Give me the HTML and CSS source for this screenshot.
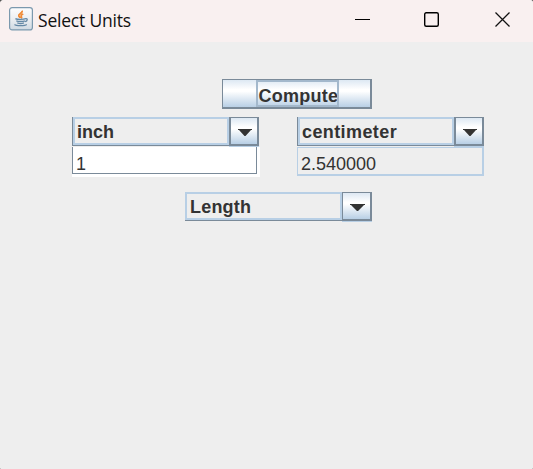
FILE: index.html
```html
<!DOCTYPE html>
<html lang="en">
<head>
<meta charset="utf-8">
<title>Select Units</title>
<link rel="stylesheet" href="styles.css">
</head>
<body>
<div class="window">
  <header class="titlebar">
    <svg class="app-icon" viewBox="0 0 24 24">
      <defs><linearGradient id="tile" x1="0" y1="0" x2="0" y2="1"><stop offset="0" stop-color="#fdfdfe"/><stop offset=".5" stop-color="#eceff2"/><stop offset="1" stop-color="#cfd9e2"/></linearGradient></defs>
      <rect x=".6" y=".6" width="22.8" height="22.3" rx="2.5" fill="url(#tile)" stroke="#7b99ae" stroke-width="1.2"/>
      <path d="M13 3.6c1.3 2.2-4 3.3-3.3 5.3.3.8 1.4 1.2 1.5 2.1M14.3 7c-2.4 1-2.7 1.8-1.8 2.8.5.6 0 1.1-.4 1.5" fill="none" stroke="#f08a35" stroke-width="1.7"/>
      <path d="M6.4 11.6c1.5 1 8.5 1 10.3 0M7.3 13.8c2 .8 6.600.8 8.600 0M8.300 15.900c2 .7 4.800.7 6.600 0M16.400 11.700c2.500-.8 2.400 2.200-.3 3M5.500 17.500c1.500 1.500 10.500 1.500 12.300 0" fill="none" stroke="#6488a5" stroke-width="1.3"/>
    </svg>
    <h1 class="title">Select Units</h1>
    <svg class="controls" viewBox="0 0 156 16">
      <path d="M0 7.5H15" stroke="#000"/>
      <rect x="69.700" y=".7" width="13.600" height="13.600" rx="1.500" fill="none" stroke="#000" stroke-width="1.4"/>
      <path d="M140.500.5l14 14M154.500.5l-14 14" stroke="#111" stroke-width="1.250" fill="none"/>
    </svg>
  </header>
  <main class="content">
    <button class="compute"><span class="focus">Compute</span></button>
    <div class="columns">
      <section class="unit">
        <div class="combo">
          <div class="value">inch</div>
          <div class="arrow"><svg viewBox="0 0 14 7"><path d="M0 0H14V1H13L7.500 7H6.500L1 1H0Z" fill="#333"/></svg></div>
        </div>
        <div class="field editable"><span class="entry">1</span></div>
      </section>
      <section class="unit">
        <div class="combo">
          <div class="value wide">centimeter</div>
          <div class="arrow"><svg viewBox="0 0 14 7"><path d="M0 0H14V1H13L7.500 7H6.500L1 1H0Z" fill="#333"/></svg></div>
        </div>
        <div class="field result">2.540000</div>
      </section>
    </div>
    <div class="combo category">
      <div class="value">Length</div>
      <div class="arrow"><svg viewBox="0 0 15 7"><path d="M0 0H15V1H14L8 7H7L1 1H0Z" fill="#333"/></svg></div>
    </div>
  </main>
</div>
</body>
</html>
```
FILE: styles.css
```css
* { box-sizing: border-box; }
body { margin: 0; background: #555; }
.window {
  width: 533px;
  height: 469px;
  overflow: hidden;
  background: #eee;
  border-radius: 4px 3px 1px 1px;
  color: #333;
  font: 18px/21px "Liberation Sans", Arial, sans-serif;
}
.titlebar {
  display: flex;
  height: 42px;
  padding: 7px 22px 0 9px;
  background: #f9f0f0;
}
.app-icon { width: 24px; height: 24px; flex: none; }
.title {
  margin: 0 0 0 5px;
  color: #111;
  font: 400 17.5px/26px "Open Sans", "Noto Sans", sans-serif;
  letter-spacing: -0.2px;
  white-space: nowrap;
}
.controls { width: 156px; height: 16px; margin: 5px 0 0 auto; flex: none; }
.content {
  display: flex;
  flex-direction: column;
  padding-top: 37px;
}
.compute {
  display: flex;
  justify-content: center;
  width: 150px;
  height: 30px;
  margin-left: 222px;
  padding: 0 0 0 1px;
  border: solid #7a8a99;
  border-width: 1px 2px 2px 1px;
  background: linear-gradient(#dde8f3, #fff 35%, #fff 42%, #b8cfe5);
  color: #333;
  font: bold 18px/27px "Liberation Sans", Arial, sans-serif;
}
.focus {
  width: 83px;
  height: 27px;
  padding-left: 1px;
  overflow: hidden;
  border: 2px solid #a3b8cc;
  line-height: 29px;
  letter-spacing: 0.25px;
  text-align: left;
}
.columns { display: flex; gap: 37px; margin: 8px 0 0 72px; }
.unit { width: 188px; }
.combo {
  display: flex;
  width: 187px;
  height: 29px;
  border-left: 1px solid #7a8a99;
  font-weight: bold;
}
.value {
  width: 156px;
  height: 28px;
  padding-left: 2px;
  border: 2px solid #b8cfe5;
  box-shadow: 0 1px #7a8a99;
  line-height: 26px;
}
.wide { letter-spacing: 0.4px; }
.arrow {
  display: flex;
  justify-content: center;
  width: 30px;
  flex: none;
  border: solid #7a8a99;
  border-width: 1px 2px 2px;
  background: linear-gradient(#dde8f3, #fff 35%, #fff 42%, #b8cfe5);
  box-shadow: 0 1px #b8cfe5;
}
.arrow svg { width: 14px; height: 7px; margin: 11px 0 0 2px; }
.field { height: 30px; margin-top: 1px; }
.editable {
  padding: 0 3px 3px 0;
  background: #fff;
}
.entry {
  display: block;
  height: 27px;
  padding-left: 3px;
  border: solid #7a8a99;
  border-width: 0 1px 1px;
  line-height: 34px;
}
.result {
  width: 187px;
  height: 29px;
  padding-left: 3px;
  border: solid #b8cfe5;
  border-width: 1px 2px 2px 1px;
  line-height: 32px;
}
.category { margin: 15px 0 0 185px; border-left: 0; }
.category .value { width: 157px; padding-left: 3px; letter-spacing: 0.2px; }
.category .arrow { border-left-width: 1px; }
.category .arrow svg { width: 15px; }
```
